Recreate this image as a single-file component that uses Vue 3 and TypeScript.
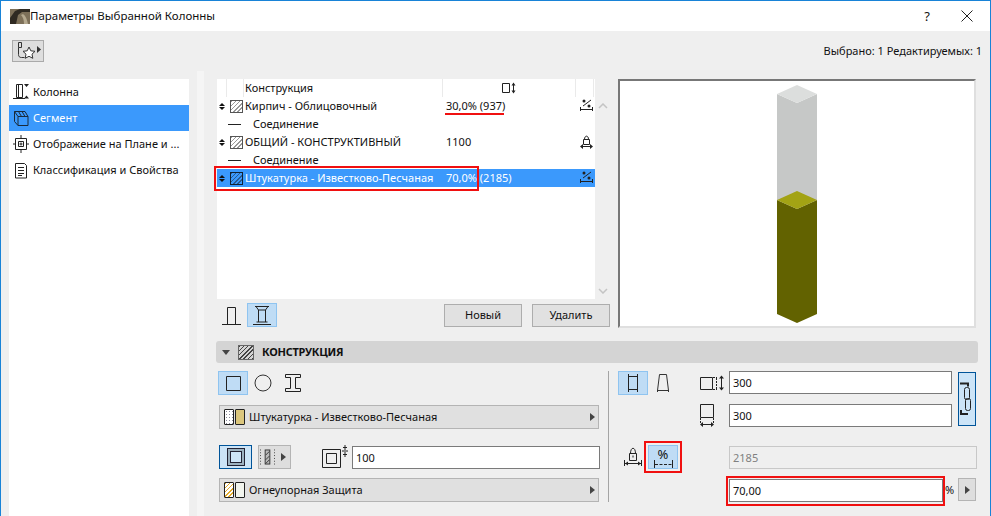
<script setup lang="ts">
interface Row { kind: 'skin' | 'join'; name: string; value?: string; rest?: string; lock?: boolean; selected?: boolean }
const sideItems = ['Колонна', 'Сегмент', 'Отображение на Плане и ...', 'Классификация и Свойства']
const rows: Row[] = [
  { kind: 'skin', name: 'Кирпич - Облицовочный', value: '30,0%', rest: ' (937)' },
  { kind: 'join', name: 'Соединение' },
  { kind: 'skin', name: 'ОБЩИЙ - КОНСТРУКТИВНЫЙ', value: '1100', rest: '', lock: true },
  { kind: 'join', name: 'Соединение' },
  { kind: 'skin', name: 'Штукатурка - Известково-Песчаная', value: '70,0%', rest: ' (2185)', selected: true }
]
</script>

<template>
  <div class="window">
    <header class="titlebar">
      <svg class="logo" width="20" height="15" viewBox="0 0 20 15">
        <rect width="20" height="15" fill="#7d7059" />
        <path d="M0 15V9L5 2l5-2h10v3h-8L8 6 6 15z" fill="#2f2a22" />
        <path d="M13 5c3 2 4 6 5 10h-4c0-4-1-7-3-9z" fill="#b5a98f" />
      </svg>
      <span class="title">Параметры Выбранной Колонны</span>
      <span class="help">?</span>
      <svg class="close" width="12" height="12" viewBox="0 0 12 12"><path d="M.5.5l11 11M11.500.5l-11 11" stroke="#222" fill="none" /></svg>
    </header>

    <div class="toolbar">
      <button class="fav">
        <svg width="30" height="20" viewBox="0 0 30 20" fill="none" stroke="#333">
          <path d="M5.500 1.500h3v5h-3zM5.500 6.500v7c0 2 1 3 3 3h3" />
          <path d="M16 6l1.800 3.800 4.200.5-3 2.900.8 4.100-3.800-2-3.800 2 .8-4.100-3-2.900 4.200-.5z" fill="#fff" />
          <path d="M24 5l4 3.500-4 3.500z" fill="#333" stroke="none" />
        </svg>
      </button>
      <span class="status">Выбрано: 1 Редактируемых: 1</span>
    </div>

    <div class="main">
      <nav class="side">
        <div v-for="(item, i) in sideItems" :key="item" class="side-item" :class="{ active: i === 1 }">
          <svg v-if="i === 0" width="20" height="20" viewBox="0 0 20 20" fill="none" stroke="#222">
            <path d="M4.500 2.500h6v13h-6zM6.500 2.500v13M1 16.500h12" />
            <path d="M12 2h5l-2.500 3zM12 16.500h5l-2.500-3z" fill="#222" stroke="none" />
          </svg>
          <svg v-else-if="i === 1" width="20" height="20" viewBox="0 0 20 20" fill="none" stroke="#1a2a3a">
            <path d="M2.500 3.500h10.500l3 5v9h-10l-3.500-4zM6 8.500h10M6 8.500v9M2.500 3.500l3.500 5M6.500 3.500l3 5M10 3.500l3 5" />
          </svg>
          <svg v-else-if="i === 2" width="20" height="20" viewBox="0 0 20 20" fill="none" stroke="#222">
            <path d="M3.500 4.500h11v11h-11zM6.500 7.500h5v5h-5zM9 1v3M9 16v3M1 10h2M15 10h2M7.500 10h3M9 8.500v3" />
          </svg>
          <svg v-else width="20" height="20" viewBox="0 0 20 20" fill="none" stroke="#222">
            <path d="M3.500 3.500h9l2 2v12.500h-11zM6 7.500h6M6 10.500h6M6 13.500h6M6 15.500h4" />
          </svg>
          <span>{{ item }}</span>
        </div>
      </nav>
      <div class="strip"></div>

      <div class="content">
        <div class="top">
          <div class="list-col">
            <div class="list-wrap">
              <div class="table">
                <div class="thead">
                  <span class="c-a"></span>
                  <span class="c-b"></span>
                  <span class="c-name">Конструкция</span>
                  <span class="c-val">
                    <svg width="14" height="12" viewBox="0 0 14 12" fill="none" stroke="#222">
                      <path d="M.5 1.500h7v9h-7z" /><path d="M11.500 2v8" />
                      <path d="M9.500 3.500l2-3 2 3zM9.500 8.500l2 3 2-3z" fill="#222" stroke="none" />
                    </svg>
                  </span>
                  <span class="c-end"></span>
                </div>
                <template v-for="(r, i) in rows" :key="i">
                  <div v-if="r.kind === 'skin'" class="tr" :class="{ selected: r.selected }">
                    <span class="updown"><i></i><i></i></span>
                    <span class="hatch" :class="{ dark: r.selected }"></span>
                    <span class="name">{{ r.name }}</span>
                    <span class="val">{{ r.value }}{{ r.rest }}</span>
                    <svg v-if="!r.lock" class="end" width="14" height="14" viewBox="0 0 14 14" fill="none" stroke="#222">
                      <path d="M3 7l8-6" /><circle cx="4" cy="2" r="1.500" fill="#222" stroke="none" /><circle cx="9" cy="7" r="1.500" fill="#222" stroke="none" />
                      <path d="M.5 8v4M12.500 8v4M1 10.500h11" />
                    </svg>
                    <svg v-else class="end" width="14" height="14" viewBox="0 0 14 14" fill="none" stroke="#222">
                      <path d="M3.500 9.500v-5h6v5zM4.500 4.500c0-4.500 4-4.500 4 0" />
                      <path d="M1 11.500h11" />
                      <path d="M0 11.500l3-2.500v5zM13 11.500l-3-2.500v5z" fill="#222" stroke="none" />
                    </svg>
                  </div>
                  <div v-else class="tr join">
                    <span class="dash"></span>
                    <span>{{ r.name }}</span>
                  </div>
                </template>
              </div>
              <div class="scroll">
                <svg width="10" height="6" viewBox="0 0 10 6" fill="none" stroke="#c4c4c4" stroke-width="1.500"><path d="M1 5l4-4 4 4" /></svg>
                <svg width="10" height="6" viewBox="0 0 10 6" fill="none" stroke="#c4c4c4" stroke-width="1.500"><path d="M1 1l4 4 4-4" /></svg>
              </div>
            </div>
            <div class="list-actions">
              <div class="ico-btn">
                <svg width="20" height="20" viewBox="0 0 20 20" fill="none" stroke="#222"><path d="M5.500 19.500v-17h8v17M0 19.500h19" /></svg>
              </div>
              <div class="ico-btn on">
                <svg width="20" height="20" viewBox="0 0 20 20" fill="none" stroke="#222"><path d="M3 1.500h14M4 1.500l2.500 3.500v12M16 1.500L13.500 5v12M6.500 5h7M4.500 17h11M1 19.500h18" /></svg>
              </div>
              <div class="grow"></div>
              <button class="btn">Новый</button>
              <button class="btn">Удалить</button>
            </div>
          </div>
          <div class="preview">
            <svg width="354" height="245" viewBox="0 0 354 245">
              <g transform="translate(-620 -81)">
                <path d="M777 94l20 9 20-9v106l-20 9-20-9z" fill="#c6c8c7" />
                <path d="M797 85l20 9-20 9-20-9z" fill="#dcdedd" />
                <path d="M777 200l20 9 20-9v114l-20 9-20-9z" fill="#626200" />
                <path d="M797 191l20 9-20 9-20-9z" fill="#a3a314" />
              </g>
            </svg>
          </div>
        </div>

        <div class="section-head">
          <span class="tri"></span>
          <span class="hatch big"></span>
          <b>КОНСТРУКЦИЯ</b>
        </div>

        <div class="lower">
          <div class="left">
            <div class="shapes">
              <div class="ico-btn on">
                <svg width="15" height="15" viewBox="0 0 15 15" fill="none" stroke="#222"><path d="M.5.5h14v14H.5z" /></svg>
              </div>
              <div class="ico-btn">
                <svg width="18" height="18" viewBox="0 0 18 18" fill="none" stroke="#333"><circle cx="9" cy="9" r="8" /></svg>
              </div>
              <div class="ico-btn">
                <svg width="16" height="18" viewBox="0 0 16 18" fill="none" stroke="#222"><path d="M.5.500h15v3h-5v11h5v3H.5v-3h5v-11h-5z" /></svg>
              </div>
            </div>
            <div class="select first">
              <span class="swatch dots"></span><span class="swatch tan"></span>
              <span class="sel-text">Штукатурка - Известково-Песчаная</span>
              <span class="arrow"></span>
            </div>
            <div class="third">
              <div class="mode on-dark">
                <svg width="18" height="18" viewBox="0 0 18 18" fill="none" stroke="#223">
                  <rect x=".5" y=".5" width="17" height="17" fill="#9db2c0" />
                  <rect x="3.500" y="3.500" width="11" height="11" fill="#cce4f7" />
                </svg>
              </div>
              <div class="mode split">
                <svg width="16" height="18" viewBox="0 0 16 18" fill="none" stroke="#333">
                  <path d="M.5 1v16M15.500 1v16" stroke-dasharray="1 2" />
                  <rect x="5.500" y="1.500" width="5" height="15" fill="#bbb" />
                  <path d="M6 7l4-4M6 12l4-4M6 16l4-4" />
                </svg>
                <span class="arrow"></span>
              </div>
              <svg class="cover" width="27" height="24" viewBox="0 0 27 24" fill="none" stroke="#222">
                <path d="M.5 4.500h18v18H.5zM4.500 8.500h10v10h-10z" />
                <path d="M23 0v5M21 2.500h4M23 7v5M21 9.500h4M20 6h6" />
              </svg>
              <div class="input fill">100</div>
            </div>
            <div class="select second">
              <span class="swatch stripes"></span><span class="swatch pale"></span>
              <span class="sel-text">Огнеупорная Защита</span>
              <span class="arrow"></span>
            </div>
          </div>

          <div class="right">
            <div class="ico-btn on r1c1">
              <svg width="14" height="20" viewBox="0 0 14 20" fill="none" stroke="#222"><path d="M2.500 3.500h9v13h-9zM2.500 1v18M11.500 1v18" /></svg>
            </div>
            <div class="ico-btn r1c2">
              <svg width="14" height="20" viewBox="0 0 14 20" fill="none" stroke="#333"><path d="M3.500 1.500h7l2 16h-11zM1.500 17v2M12.500 17v2" /></svg>
            </div>
            <svg class="r1dim" width="25" height="16" viewBox="0 0 25 16" fill="none" stroke="#222">
              <path d="M.5 2.500h12v12H.5z" /><path d="M13 2.500h4M13 14.500h4M16.500 3v11" stroke-dasharray="2 1" />
              <path d="M21.500 2v12" /><path d="M19 3.500l2.500-3 2.500 3zM19 12.500l2.500 3 2.500-3z" fill="#222" stroke="none" />
            </svg>
            <div class="input r1in">300</div>
            <div class="chain r1chain">
              <svg width="14" height="44" viewBox="0 0 14 44" fill="none" stroke="#222">
                <path d="M0 6.500h8v3M1 33v4h7" stroke-width="2" />
                <rect x="4.500" y="10.500" width="5" height="12" rx="2" /><rect x="5.500" y="21.500" width="5" height="12" rx="2" />
              </svg>
            </div>
            <svg class="r2dim" width="16" height="24" viewBox="0 0 16 24" fill="none" stroke="#222">
              <path d="M.5 .5h13v13H.5z" /><path d="M.5 14v6M13.500 14v6" stroke-dasharray="2 1" />
              <path d="M1 20.500h12" /><path d="M0 20.500l3-2.500v5zM14 20.500l-3-2.500v5z" fill="#222" stroke="none" />
            </svg>
            <div class="input r2in">300</div>
            <div class="r3lock">
              <svg width="18" height="20" viewBox="0 0 18 20" fill="none" stroke="#222">
                <path d="M5.500 13.500v-7h7v7zM6.500 6.500c0-7 5-7 5 0M9 8.500v2" />
                <path d="M.5 13v6M17.500 13v6M1 16.500h16" />
                <path d="M1 16.500l3-2v4zM17 16.500l-3-2v4z" fill="#222" stroke="none" />
              </svg>
            </div>
            <div class="ico-btn on r3pct">
              <span class="pct-mark">%</span>
              <svg width="19" height="8" viewBox="0 0 19 8" fill="none" stroke="#222"><path d="M.5 0v8M18.500 0v8" /><path d="M1 4.500h17" stroke-dasharray="3 1.500" /></svg>
            </div>
            <div class="input off r3in">2185</div>
            <div class="r4in">
              <div class="input w70">70,00</div>
              <span class="pct-unit">%</span>
            </div>
            <div class="play r4btn"><span class="arrow"></span></div>
          </div>
        </div>
      </div>
    </div>

    <i class="mark underline"></i>
    <i class="mark box-row"></i>
    <i class="mark box-pct"></i>
    <i class="mark box-input"></i>
  </div>
</template>

<style>
html, body { margin: 0; padding: 0; overflow: hidden; }
</style>

<style scoped>
.window {
  position: relative;
  box-sizing: border-box;
  width: 991px;
  height: 516px;
  display: flex;
  flex-direction: column;
  overflow: hidden;
  border: 1px solid #1883d7;
  border-bottom: 0;
  background: #efefef;
  font: 11px/18px "Noto Sans", sans-serif;
  color: #111;
}
.titlebar {
  display: flex;
  align-items: center;
  height: 30px;
  padding-left: 9px;
  background: #fff;
  flex: none;
}
.title { font-size: 11.5px; color: #111; }
.logo { flex: none; }
.help { margin-left: auto; font-size: 13px; margin-right: 31px; }
.close { margin-right: 17px; }
.toolbar {
  flex: none;
  display: flex;
  align-items: center;
  height: 22px;
  padding: 9px 8px 9px 11px;
}
.fav {
  box-sizing: border-box;
  width: 32px;
  height: 22px;
  padding: 0;
  background: #dedede;
  border: 1px solid #aaa;
  display: flex;
  align-items: center;
  justify-content: center;
}
.status { margin-left: auto; }
.main { flex: 1; display: flex; min-height: 0; }
.side {
  width: 180px;
  margin: 8px 0 0 8px;
  background: #fff;
  flex: none;
}
.side-item {
  display: flex;
  align-items: center;
  gap: 1px;
  height: 26px;
  padding-left: 3px;
  white-space: nowrap;
}
.side-item svg { flex: none; }
.side-item.active { background: #3b99fc; color: #fff; }
.strip { width: 7px; margin-left: 8px; background: #f5f5f5; flex: none; }
.content { margin-left: 13px; padding-top: 8px; width: 761px; flex: none; }
.top { display: flex; gap: 8px; }
.list-col { width: 393px; flex: none; }
.list-wrap { display: flex; height: 220px; }
.table { width: 378px; background: #fff; flex: none; }
.thead { display: flex; height: 18px; }
.thead > span { border-right: 1px solid #eaeaea; box-sizing: border-box; }
.c-a { width: 10px; }
.c-b { width: 17px; }
.c-name { width: 199px; padding-left: 1px; }
.c-val { width: 133px; display: flex; align-items: center; justify-content: center; }
.c-end { width: 18px; }
.tr { display: flex; align-items: center; height: 18px; position: relative; white-space: pre; }
.tr.selected { background: #3b99fc; color: #fff; }
.updown { width: 6px; margin: 0 5px 0 2px; display: flex; flex-direction: column; gap: 1px; }
.updown i { width: 0; height: 0; border: 3px solid transparent; border-top: 0; border-bottom: 3px solid #111; }
.updown i + i { border-bottom: 0; border-top: 3px solid #111; }
.hatch {
  box-sizing: border-box;
  width: 13px;
  height: 13px;
  border: 1px solid #555;
  background: repeating-linear-gradient(135deg, #999 0 1px, #fff 1px 3px);
  flex: none;
}
.hatch.dark { border-color: #123; background: repeating-linear-gradient(135deg, #2a5a90 0 1px, #3b99fc 1px 3px); }
.hatch.big { width: 16px; height: 15px; border-color: #666; background: repeating-linear-gradient(135deg, #444 0 1px, #d4d4d4 1px 3px); }
.name { width: 201px; margin-left: 2px; flex: none; }
.val { flex: 1; }
.end { margin-right: 1px; flex: none; }
.join { padding-left: 11px; }
.dash { width: 13px; height: 1px; background: #222; margin-right: 12px; }
.scroll {
  width: 15px;
  display: flex;
  flex-direction: column;
  align-items: center;
  justify-content: space-between;
  padding: 24px 0 5px;
  box-sizing: border-box;
}
.list-actions { display: flex; align-items: center; height: 24px; margin-top: 4px; }
.grow { flex: 1; }
.ico-btn {
  box-sizing: border-box;
  width: 30px;
  height: 24px;
  display: flex;
  align-items: center;
  justify-content: center;
  border: 1px solid transparent;
  flex: none;
}
.ico-btn.on { background: #bfdcf5; border-color: #8fc4f0; }
.btn {
  box-sizing: border-box;
  width: 78px;
  height: 23px;
  padding: 0;
  margin-left: 10px;
  background: #e1e1e1;
  border: 1px solid #adadad;
  font: inherit;
  color: #111;
}
.preview {
  box-sizing: border-box;
  width: 358px;
  height: 249px;
  background: #fff;
  border: 2px solid #dfdfdf;
  border-top-color: #777;
  border-left-color: #777;
  flex: none;
}
.preview svg { display: block; }
.section-head {
  display: flex;
  align-items: center;
  height: 22px;
  margin: 13px 0 0 -1px;
  width: 762px;
  background: #d4d4d4;
  border-radius: 3px;
  padding-left: 6px;
  box-sizing: border-box;
}
.tri { width: 0; height: 0; border: 4px solid transparent; border-bottom: 0; border-top: 5px solid #444; margin-right: 8px; }
.section-head b { margin-left: 8px; font-weight: 700; letter-spacing: -.25px; }
.lower { display: flex; margin-top: 8px; }
.left { width: 382px; padding-left: 2px; flex: none; box-sizing: border-box; }
.shapes { display: flex; height: 24px; margin-left: -1px; }
.select {
  box-sizing: border-box;
  width: 380px;
  height: 24px;
  display: flex;
  align-items: center;
  padding-left: 4px;
  background: #e0e0e0;
  border: 1px solid #b4b4b4;
}
.first { margin-top: 10px; }
.second { margin-top: 9px; }
.swatch { box-sizing: border-box; width: 10px; height: 16px; border: 1px solid #222; border-radius: 1px; margin-right: 1px; flex: none; }
.dots { background: radial-gradient(#889 35%, #fff 40%) 0 0 / 3px 3px; }
.tan { background: #dbc67c; }
.stripes { background: repeating-linear-gradient(135deg, #e0a92a 0 1px, #fff 1px 3px); }
.pale { background: #f2f5ee; }
.sel-text { margin-left: 3px; }
.arrow { width: 0; height: 0; border: 4px solid transparent; border-right: 0; border-left: 5px solid #444; margin-left: auto; margin-right: 3px; }
.third { display: flex; align-items: center; height: 24px; margin-top: 16px; }
.mode {
  box-sizing: border-box;
  width: 33px;
  height: 24px;
  display: flex;
  align-items: center;
  justify-content: center;
  flex: none;
}
.on-dark { background: #cce4f7; border: 1px solid #005499; }
.split { margin-left: 6px; background: #dedede; border: 1px solid #b4b4b4; justify-content: flex-start; padding-left: 1px; }
.split .arrow { margin-right: 4px; margin-left: 6px; }
.cover { margin-left: 31px; margin-right: 3px; flex: none; }
.input {
  box-sizing: border-box;
  height: 23px;
  padding-left: 3px;
  line-height: 21px;
  background: #fff;
  border: 1px solid #7a7a7a;
  font-size: 11px;
}
.fill { flex: none; width: 248px; margin-right: -1px; }
.right {
  flex: none;
  display: grid;
  grid-template-columns: 30px 30px 22px 29px 223px 6px 19px;
  grid-template-rows: 24px 9px 24px 17px 24px 9px 24px;
  border-left: 1px solid #a4a4a4;
  margin-left: 9px;
  padding-left: 9px;
  height: 131px;
}
.r1c1 { grid-area: 1 / 1; }
.r1c2 { grid-area: 1 / 2; }
.r1dim { grid-area: 1 / 4; margin-top: 4px; }
.r1in { grid-area: 1 / 5; }
.r1chain { grid-area: 1 / 7 / 4 / 8; }
.chain {
  box-sizing: border-box;
  width: 18px;
  height: 54px;
  margin-top: 1px;
  background: #cce4f7;
  border: 1px solid #005499;
  display: flex;
  align-items: center;
  justify-content: center;
}
.r2dim { grid-area: 3 / 4; }
.r2in { grid-area: 3 / 5; }
.r3lock { grid-area: 5 / 1 / 6 / 2; display: flex; justify-content: flex-end; align-items: center; margin-right: 6px; }
.r3pct { grid-area: 5 / 2; flex-direction: column; justify-content: flex-start; padding-top: 3px; }
.pct-mark { line-height: 11px; font-size: 13px; font-weight: 400; }
.r3in { grid-area: 5 / 5 / 6 / 8; width: 248px; margin-top: 1px; }
.off { background: #efefef; border-color: #c8c8c8; color: #808080; }
.r4in { grid-area: 7 / 5 / 8 / 7; display: flex; align-items: center; }
.w70 { width: 214px; margin-top: 1px; flex: none; }
.pct-unit { margin-left: 2px; }
.r4btn { grid-area: 7 / 7; }
.play {
  box-sizing: border-box;
  width: 18px;
  height: 23px;
  background: #dedede;
  border: 1px solid #b4b4b4;
  display: flex;
  align-items: center;
}
.play .arrow { margin: 0 auto; }
.mark { position: absolute; box-sizing: border-box; border: 2px solid #f01010; pointer-events: none; }
.underline { left: 444px; top: 112px; width: 59px; height: 2px; border-width: 2px 0 0; }
.box-row { left: 213px; top: 165px; width: 265px; height: 25px; }
.box-pct { left: 643px; top: 440px; width: 38px; height: 32px; }
.box-input { left: 725px; top: 475px; width: 219px; height: 30px; }
</style>
